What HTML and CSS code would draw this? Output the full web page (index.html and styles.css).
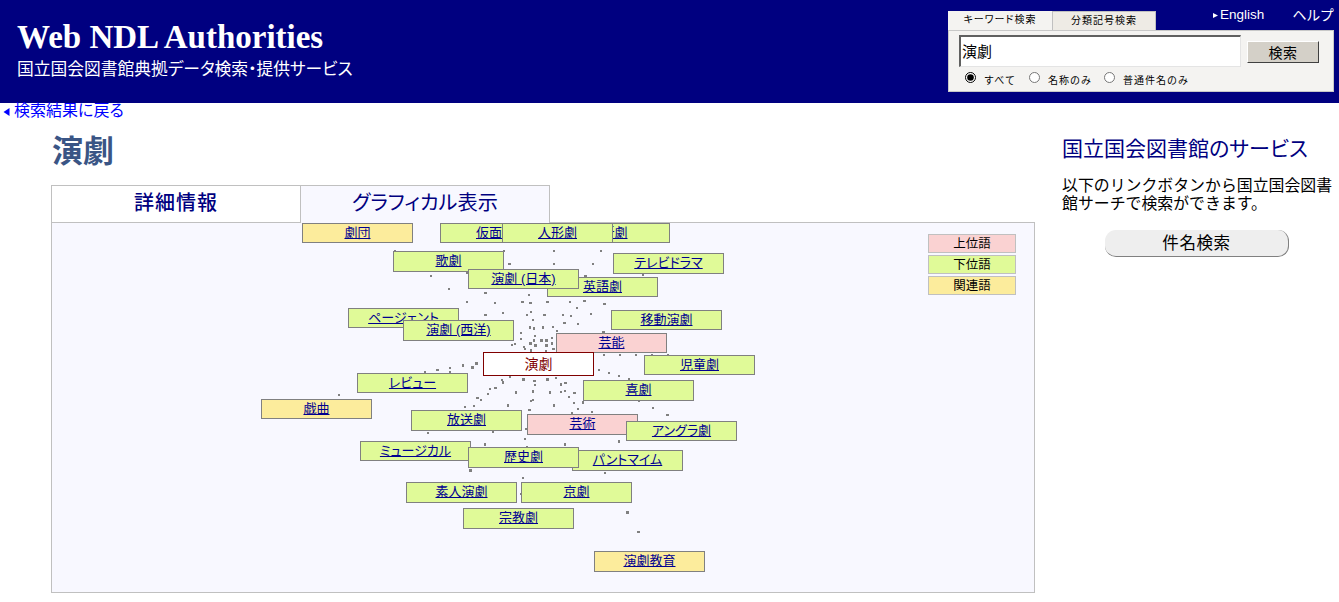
FILE: index.html
```html
<!DOCTYPE html>
<html lang="ja">
<head>
<meta charset="utf-8">
<title>演劇 - Web NDL Authorities</title>
<link rel="stylesheet" href="styles.css">
</head>
<body>
<header class="site-header">
  <div class="brand">
    <div class="brand-title">Web NDL Authorities</div>
    <div class="brand-sub">国立国会図書館典拠データ検索・提供サービス</div>
  </div>
  <div class="search-area">
    <div class="search-top">
      <div class="tab-row">
        <a class="s-tab s-tab-on">キーワード検索</a>
        <a class="s-tab s-tab-off">分類記号検索</a>
      </div>
      <nav class="top-links">
        <a class="top-link"><svg class="top-arrow" viewBox="0 0 6 6"><path d="M0 0L6 3L0 6Z" fill="#ffffff"/></svg>English</a>
        <a class="top-link top-help">ヘルプ</a>
      </nav>
    </div>
    <form class="search-box">
      <div class="search-line">
        <input class="search-input" type="text" value="演劇">
        <button class="search-btn" type="button">検索</button>
      </div>
      <div class="radio-line">
        <label class="radio r-all"><input type="radio" name="s" checked><span>すべて</span></label>
        <label class="radio r-name"><input type="radio" name="s"><span>名称のみ</span></label>
        <label class="radio r-sub"><input type="radio" name="s"><span>普通件名のみ</span></label>
      </div>
    </form>
  </div>
</header>

<a class="back-link"><svg class="back-arrow" viewBox="0 0 6 8"><path d="M6 0L0 4L6 8Z" fill="#0000ff"/></svg>検索結果に戻る</a>

<div class="page">
  <main class="main">
    <h1 class="heading">演劇</h1>
    <div class="view-tabs">
      <a class="view-tab view-tab-detail">詳細情報</a>
      <a class="view-tab view-tab-graph">グラフィカル表示</a>
    </div>
    <div class="canvas">
      <svg class="dots" viewBox="52 223 982 369" width="982" height="369">
        <path fill="#808080" d="M394 250h2v2h-2zM503 250h2v2h-2zM553 250h2v2h-2zM600 250h2v2h-2zM508 263h3v2h-3zM553 263h2v2h-2zM592 263h2v2h-2zM466 271h3v3h-3zM430 275h2v2h-2zM584 275h3v2h-3zM642 274h2v2h-2zM448 288h2v2h-2zM484 292h3v2h-3zM528 294h2v2h-2zM466 301h2v2h-2zM494 302h2v2h-2zM521 301h3v2h-3zM529 302h3v2h-3zM546 301h3v2h-3zM569 301h2v2h-2zM583 300h3v2h-3zM603 303h3v2h-3zM576 307h2v2h-2zM484 314h3v2h-3zM502 312h2v2h-2zM530 311h2v2h-2zM526 314h2v2h-2zM543 314h3v2h-3zM562 314h2v2h-2zM570 315h2v2h-2zM590 313h2v2h-2zM532 319h2v2h-2zM563 322h3v2h-3zM577 323h2v2h-2zM529 326h2v3h-2zM533 327h2v3h-2zM542 326h2v3h-2zM552 326h2v2h-2zM556 330h2v2h-2zM520 332h2v2h-2zM534 335h2v2h-2zM520 338h2v2h-2zM533 339h2v3h-2zM540 339h3v3h-3zM545 339h3v3h-3zM551 337h2v2h-2zM551 342h2v3h-2zM529 342h3v3h-3zM514 343h2v2h-2zM511 344h2v2h-2zM523 346h2v2h-2zM534 344h3v3h-3zM545 344h3v3h-3zM552 348h3v2h-3zM530 349h2v3h-2zM524 348h2v2h-2zM545 350h2v2h-2zM602 331h3v2h-3zM475 362h3v3h-3zM471 366h3v3h-3zM462 364h2v3h-2zM449 367h2v2h-2zM449 371h2v2h-2zM436 369h3v2h-3zM424 371h2v2h-2zM501 379h2v2h-2zM502 381h2v3h-2zM509 376h2v2h-2zM522 378h3v3h-3zM515 391h2v3h-2zM494 387h3v2h-3zM489 388h2v2h-2zM487 393h2v2h-2zM476 397h3v2h-3zM480 399h2v2h-2zM473 405h2v2h-2zM464 406h2v2h-2zM507 404h2v3h-2zM338 394h2v2h-2zM427 432h2v2h-2zM492 431h2v2h-2zM525 428h2v2h-2zM524 438h2v2h-2zM528 409h3v2h-3zM533 380h3v2h-3zM534 384h2v2h-2zM546 378h3v3h-3zM555 377h2v2h-2zM560 383h2v3h-2zM564 382h3v2h-3zM598 369h2v2h-2zM608 372h2v2h-2zM618 375h2v2h-2zM628 378h2v3h-2zM532 390h2v3h-2zM549 391h2v3h-2zM560 391h2v2h-2zM564 390h2v2h-2zM568 396h2v2h-2zM573 392h3v2h-3zM532 399h2v2h-2zM530 400h2v2h-2zM553 404h2v3h-2zM573 402h2v2h-2zM582 401h2v3h-2zM571 412h2v2h-2zM591 411h2v2h-2zM638 400h2v2h-2zM652 407h2v2h-2zM666 414h3v2h-3zM603 354h2v2h-2zM619 354h2v2h-2zM635 354h2v2h-2zM651 354h2v2h-2zM667 354h2v2h-2zM577 408h2v2h-2zM484 443h2v3h-2zM526 446h2v2h-2zM564 443h2v3h-2zM618 440h2v3h-2zM469 469h3v3h-3zM604 472h2v2h-2zM522 477h2v2h-2zM520 493h2v2h-2zM626 511h3v3h-3zM637 531h3v2h-3z"/>
      </svg>
      <a class="node related" style="left:250px;top:0;height:20px">劇団</a>
      <a class="node lower" style="left:388px;top:0;height:20px">仮面劇</a>
      <a class="node lower" style="left:507px;top:0;height:20px">新劇</a>
      <a class="node lower" style="left:450px;top:0;height:20px">人形劇</a>
      <a class="node lower" style="left:341px;top:28px;height:21px">歌劇</a>
      <a class="node lower" style="left:561px;top:30px;height:21px">テレビドラマ</a>
      <a class="node lower" style="left:495px;top:54px;height:20px">英語劇</a>
      <a class="node lower" style="left:416px;top:46px;height:20px">演劇 (日本)</a>
      <a class="node lower" style="left:296px;top:85px;height:20px">ページェント</a>
      <a class="node lower" style="left:351px;top:97px;height:21px">演劇 (西洋)</a>
      <a class="node lower" style="left:559px;top:87px;height:20px">移動演劇</a>
      <a class="node lower" style="left:592px;top:132px;height:20px">児童劇</a>
      <a class="node upper" style="left:504px;top:110px;height:20px">芸能</a>
      <span class="node center" style="left:431px;top:129px;height:24px">演劇</span>
      <a class="node lower" style="left:305px;top:150px;height:20px">レビュー</a>
      <a class="node lower" style="left:531px;top:157px;height:21px">喜劇</a>
      <a class="node related" style="left:209px;top:176px;height:20px">戯曲</a>
      <a class="node lower" style="left:359px;top:187px;height:21px">放送劇</a>
      <a class="node upper" style="left:475px;top:191px;height:21px">芸術</a>
      <a class="node lower" style="left:574px;top:198px;height:20px">アングラ劇</a>
      <a class="node lower" style="left:308px;top:218px;height:20px">ミュージカル</a>
      <a class="node lower" style="left:520px;top:227px;height:21px">パントマイム</a>
      <a class="node lower" style="left:416px;top:224px;height:21px">歴史劇</a>
      <a class="node lower" style="left:354px;top:259px;height:21px">素人演劇</a>
      <a class="node lower" style="left:469px;top:259px;height:21px">京劇</a>
      <a class="node lower" style="left:411px;top:285px;height:21px">宗教劇</a>
      <a class="node related" style="left:542px;top:328px;height:21px">演劇教育</a>
      <div class="legend">
        <div class="legend-item upper">上位語</div>
        <div class="legend-item lower">下位語</div>
        <div class="legend-item related">関連語</div>
      </div>
    </div>
  </main>
  <aside class="side">
    <h2 class="side-title">国立国会図書館のサービス</h2>
    <p class="side-text">以下のリンクボタンから国立国会図書館サーチで検索ができます。</p>
    <a class="side-btn">件名検索</a>
  </aside>
</div>
</body>
</html>
```
FILE: styles.css
```css
* { box-sizing: border-box; }
html, body { margin: 0; padding: 0; background: #ffffff; }
body {
  font-family: "Liberation Sans", "Noto Sans CJK JP", sans-serif;
  font-feature-settings: "palt";
  color: #000000;
  overflow: hidden;
  height: 602px;
}
a { cursor: pointer; }

.site-header {
  height: 103px;
  background: #000080;
  display: flex;
  justify-content: space-between;
  color: #ffffff;
}
.brand { padding: 18px 0 0 17px; }
.brand-title {
  font-family: "Liberation Serif", "Noto Serif", serif;
  font-weight: bold;
  font-size: 33px;
  line-height: 38px;
}
.brand-sub {
  font-size: 16.75px;
  line-height: 22px;
  margin-top: 3px;
}

.search-area { width: 386px; margin-right: 5px; padding-top: 5px; color: #000000; }
.search-top { display: flex; justify-content: space-between; height: 25px; }
.tab-row { display: flex; align-items: flex-end; }
.s-tab {
  width: 104px;
  height: 19px;
  font-size: 10px;
  line-height: 18px;
  letter-spacing: 1px;
  text-align: center;
}
.s-tab-on { background: #f4f3f1; color: #000000; }
.s-tab-off {
  background: #eeebe5;
  color: #000000;
  border: 1px solid #c0c0c0;
  border-bottom: 0;
}
.top-links { display: flex; }
.top-link { color: #ffffff; font-size: 13.5px; line-height: 20px; display: flex; align-items: center; height: 20px; }
.top-arrow { width: 5px; height: 5px; margin-right: 2px; }
.top-help { margin-left: 28px; font-size: 14px; letter-spacing: 0.5px; }

.search-box {
  height: 62px;
  background: #f4f3f1;
  border: 1px solid #c8c8c8;
  padding: 4px 0 0 10px;
}
.search-line { display: flex; align-items: center; height: 32px; }
.search-input {
  width: 282px;
  height: 32px;
  border: 1px solid #e4e4e4;
  border-top: 2px solid #606060;
  border-left: 2px solid #606060;
  background: #ffffff;
  font-family: "Liberation Sans", "Noto Sans CJK JP", sans-serif;
  font-size: 15px;
  padding: 0 0 3px 1px;
  color: #000000;
  outline: none;
}
.search-btn {
  width: 72px;
  height: 22px;
  margin-left: 6px;
  margin-top: 1px;
  background: #d4d0c8;
  border: 1px solid #ffffff;
  border-right: 1px solid #404040;
  border-bottom: 1px solid #404040;
  font-family: "Liberation Sans", "Noto Sans CJK JP", sans-serif;
  font-size: 14px;
  padding: 0 0 3px 0;
  letter-spacing: 0.5px;
  color: #000000;
}
.radio-line { display: flex; margin-top: 3px; height: 17px; }
.radio {
  display: flex;
  align-items: center;
  font-size: 10px;
  letter-spacing: 1px;
  font-feature-settings: normal;
  color: #000000;
}
.radio input { width: 11px; height: 11px; margin: 0 8px 3px 0; accent-color: #000000; }
.radio span { padding-top: 1px; }
.r-all { width: 70px; padding-left: 6px; }
.r-name { width: 75px; }

.back-link {
  display: flex;
  align-items: center;
  height: 16px;
  line-height: 16px;
  font-size: 16px;
  color: #0000ff;
  padding-left: 3px;
}
.back-arrow { width: 7px; height: 8px; margin-right: 4px; margin-top: 1px; }

.page { display: flex; }
.main { width: 984px; margin-left: 51px; flex: none; }
.heading {
  margin: 0;
  padding: 17px 0 0 1px;
  height: 66px;
  font-size: 31px;
  line-height: 32px;
  font-weight: bold;
  font-feature-settings: normal;
  color: #3a5585;
}
.view-tabs { display: flex; height: 38px; position: relative; z-index: 1; }
.view-tab {
  width: 250px;
  height: 38px;
  border: 1px solid #c0c0c0;
  color: #000080;
  text-align: center;
  line-height: 35px;
}
.view-tab-detail {
  background: #ffffff;
  font-size: 20px;
  font-weight: 500;
  letter-spacing: 1px;
}
.view-tab-graph {
  width: 250px;
  margin-left: -1px;
  background: #f8f8ff;
  border-bottom: 0;
  font-size: 20.2px;
}
.canvas {
  position: relative;
  width: 984px;
  height: 371px;
  margin-top: -1px;
  background: #f8f8ff;
  border: 1px solid #c0c0c0;
}
.dots { position: absolute; left: 0; top: 0; display: block; }
.node {
  position: absolute;
  width: 111px;
  border: 1px solid #808080;
  text-align: center;
  font-size: 13px;
  line-height: 18px;
  color: #000090;
  text-decoration: underline;
  white-space: nowrap;
}
.lower { background: #e0fa98; }
.upper { background: #fad2d2; }
.related { background: #fcec9c; }
.node.center {
  background: #ffffff;
  border-color: #800000;
  color: #800000;
  text-decoration: none;
  font-size: 14px;
  line-height: 22px;
}
.legend {
  position: absolute;
  left: 876px;
  top: 11px;
  width: 88px;
  display: flex;
  flex-direction: column;
  gap: 2px;
}
.legend-item {
  height: 19px;
  border: 1px solid #c0c0c0;
  font-size: 12.5px;
  line-height: 18px;
  text-align: center;
  color: #000000;
}

.side { width: 278px; margin-left: 27px; flex: none; }
.side-title {
  margin: 0;
  padding-top: 15px;
  font-size: 21px;
  line-height: 30px;
  font-weight: normal;
  color: #000080;
  white-space: nowrap;
}
.side-text {
  margin: 13px 0 0 0;
  width: 272px;
  font-size: 15.9px;
  line-height: 18px;
  font-feature-settings: normal;
}
.side-btn {
  display: block;
  width: 184px;
  height: 27px;
  margin: 17px 0 0 43px;
  background: #eeeeee;
  border-radius: 11px;
  border-right: 1px solid #808080;
  border-bottom: 1px solid #808080;
  text-align: center;
  font-size: 16.5px;
  letter-spacing: 0.6px;
  line-height: 26px;
  font-feature-settings: normal;
  color: #000000;
}
```
